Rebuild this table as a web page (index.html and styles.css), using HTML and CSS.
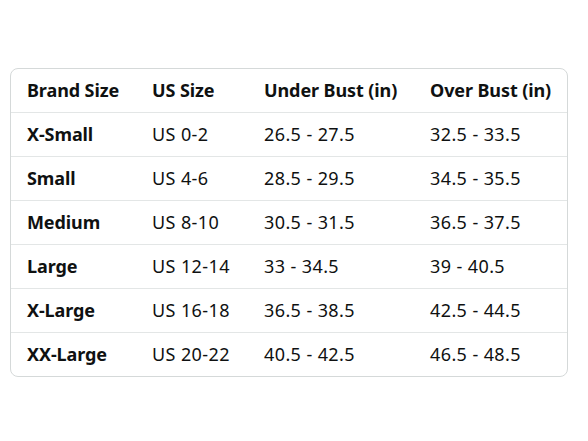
FILE: index.html
```html
<!DOCTYPE html>
<html>
<head>
<meta charset="utf-8">
<link rel="stylesheet" href="styles.css">
</head>
<body>
<div class="page">
  <table class="chart">
    <colgroup>
      <col class="c1"><col class="c2"><col class="c3"><col class="c4">
    </colgroup>
    <thead>
      <tr><th>Brand Size</th><th>US Size</th><th>Under Bust (in)</th><th>Over Bust (in)</th></tr>
    </thead>
    <tbody>
      <tr><th>X-Small</th><td>US 0-2</td><td>26.5 - 27.5</td><td>32.5 - 33.5</td></tr>
      <tr><th>Small</th><td>US 4-6</td><td>28.5 - 29.5</td><td>34.5 - 35.5</td></tr>
      <tr><th>Medium</th><td>US 8-10</td><td>30.5 - 31.5</td><td>36.5 - 37.5</td></tr>
      <tr><th>Large</th><td>US 12-14</td><td>33 - 34.5</td><td>39 - 40.5</td></tr>
      <tr><th>X-Large</th><td>US 16-18</td><td>36.5 - 38.5</td><td>42.5 - 44.5</td></tr>
      <tr><th>XX-Large</th><td>US 20-22</td><td>40.5 - 42.5</td><td>46.5 - 48.5</td></tr>
    </tbody>
  </table>
</div>
</body>
</html>
```
FILE: styles.css
```css
html, body {
  margin: 0;
  padding: 0;
  background: #ffffff;
}
.page {
  padding: 68px 0 0 10px;
}
.chart {
  width: 558px;
  border: 1px solid #d5d9d9;
  border-radius: 8px;
  border-collapse: separate;
  border-spacing: 0;
  table-layout: fixed;
  font-family: "Noto Sans", "Open Sans", sans-serif;
  font-size: 18px;
  color: #0f1111;
}
.c1 { width: 125px; }
.c2 { width: 112px; }
.c3 { width: 166px; }
.c4 { width: auto; }
.chart th, .chart td {
  height: 41px;
  padding: 0 0 2px 16px;
  text-align: left;
  vertical-align: middle;
  border-bottom: 1px solid #e3e6e6;
  white-space: nowrap;
  line-height: 20px;
}
.chart th { font-weight: 700; letter-spacing: -0.1px; }
.chart td { font-weight: 400; letter-spacing: 0.4px; }
.chart tbody tr:last-child th,
.chart tbody tr:last-child td {
  border-bottom: none;
}
```
